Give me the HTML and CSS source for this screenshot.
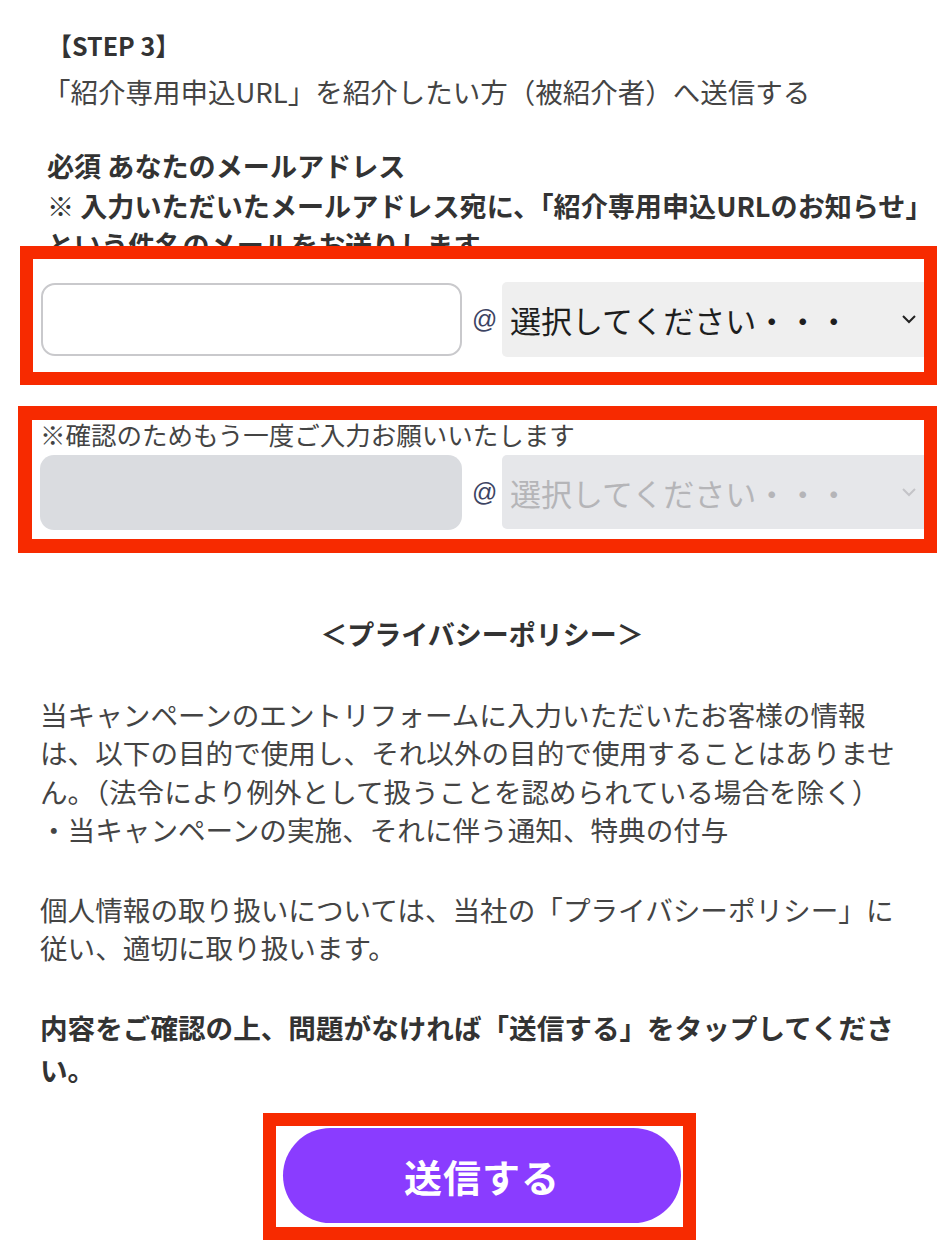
FILE: index.html
```html
<!DOCTYPE html>
<html lang="ja">
<head>
<meta charset="utf-8">
<title>STEP 3</title>
<link rel="stylesheet" href="styles.css">
</head>
<body>
<main class="page">
  <section class="intro">
    <h2 class="step-title">【STEP 3】</h2>
    <p class="step-desc">「紹介専用申込URL」を紹介したい方（被紹介者）へ送信する</p>
    <div class="required">
      <p>必須 あなたのメールアドレス</p>
      <p>※ 入力いただいたメールアドレス宛に、「紹介専用申込URLのお知らせ」という件名のメールをお送りします。</p>
    </div>
  </section>

  <div class="email-row">
    <div class="text-input"></div>
    <span class="at">@</span>
    <div class="select">
      <span class="select-text">選択してください・・・</span>
      <svg class="chev" width="16" height="10" viewBox="0 0 16 10"><path d="M2 2 L8 8 L14 2" fill="none" stroke="#222" stroke-width="2"/></svg>
    </div>
  </div>

  <p class="confirm-label">※確認のためもう一度ご入力お願いいたします</p>
  <div class="email-row confirm-row">
    <div class="text-input disabled"></div>
    <span class="at">@</span>
    <div class="select disabled">
      <span class="select-text">選択してください・・・</span>
      <svg class="chev" width="16" height="10" viewBox="0 0 16 10"><path d="M2 2 L8 8 L14 2" fill="none" stroke="#c4c4c8" stroke-width="2"/></svg>
    </div>
  </div>

  <section class="privacy">
    <h3 class="privacy-title">＜プライバシーポリシー＞</h3>
    <p class="privacy-text">当キャンペーンのエントリフォームに入力いただいたお客様の情報は、以下の目的で使用し、それ以外の目的で使用することはありません。（法令により例外として扱うことを認められている場合を除く）<br>・当キャンペーンの実施、それに伴う通知、特典の付与</p>
    <p class="privacy-text gap">個人情報の取り扱いについては、当社の「プライバシーポリシー」に従い、適切に取り扱います。</p>
    <p class="confirm-note">内容をご確認の上、問題がなければ「送信する」をタップしてください。</p>
  </section>

  <div class="submit-wrap">
    <button class="submit" type="button">送信する</button>
  </div>

  <div class="mark mark-1"></div>
  <div class="mark mark-2"></div>
  <div class="mark mark-3"></div>
</main>
</body>
</html>
```

FILE: styles.css
```css
* { box-sizing: border-box; }

html, body {
  margin: 0;
  padding: 0;
  background: #ffffff;
}

body {
  font-family: "Noto Sans CJK JP", "Noto Sans", sans-serif;
  color: #444444;
}

.page {
  position: relative;
  width: 944px;
  min-height: 1257px;
  padding-top: 22px;
  overflow: hidden;
}

.intro {
  padding-left: 47px;
  width: 937px;
}

.step-title {
  margin: 0;
  font-size: 25px;
  line-height: 46px;
  font-weight: 700;
  color: #333333;
}

.step-desc {
  margin: 0 0 0 -4px;
  font-size: 27.5px;
  line-height: 46px;
  color: #444444;
}

.required {
  margin-top: 32px;
  font-weight: 700;
  font-size: 27.1px;
  line-height: 39.5px;
  color: #333333;
}

.required p {
  margin: 0;
}

.email-row {
  display: flex;
  align-items: center;
  margin-top: 17px;
  padding-left: 41px;
  gap: 10px;
  height: 75px;
}

.text-input {
  width: 421px;
  height: 73px;
  border: 2px solid #c9c9cc;
  border-radius: 14px;
  background: #ffffff;
  flex-shrink: 0;
}

.text-input.disabled {
  height: 75px;
  border: none;
  background: #dadce0;
  margin-left: -1px;
  width: 422px;
}

.at {
  width: 20px;
  text-align: center;
  font-family: "Liberation Sans", sans-serif;
  font-size: 25px;
  color: #3d4463;
  flex-shrink: 0;
}

.select {
  display: flex;
  align-items: center;
  width: 428px;
  height: 75px;
  padding: 0 13px 0 8px;
  background: #efefef;
  border-radius: 5px;
  flex-shrink: 0;
}

.select-text {
  font-size: 31px;
  color: #1e1e1e;
  white-space: nowrap;
}

.chev {
  margin-left: auto;
}

.select.disabled {
  background: #e6e7ea;
  height: 74px;
}

.select.disabled .select-text {
  color: #b5b5b8;
}

.confirm-label {
  margin: 59px 0 0 40px;
  font-size: 25.5px;
  line-height: 36px;
  color: #444444;
}

.confirm-row {
  margin-top: 3px;
}

.privacy {
  margin-top: 84px;
  padding: 0 29px 0 40px;
  width: 944px;
}

.privacy-title {
  margin: 0;
  padding-left: 9px;
  text-align: center;
  font-size: 27px;
  line-height: 40px;
  font-weight: 700;
  color: #333333;
}

.privacy-text {
  margin: 41px 0 0;
  font-size: 27.6px;
  line-height: 38.5px;
  color: #444444;
}

.confirm-note {
  margin: 39px 0 0;
  font-size: 27.6px;
  line-height: 42px;
  font-weight: 700;
  color: #333333;
}

.submit-wrap {
  display: flex;
  justify-content: center;
  padding-left: 20px;
  margin-top: 38px;
}

.submit {
  width: 398px;
  height: 95px;
  border: none;
  border-radius: 48px;
  background: #8a3cff;
  color: #ffffff;
  font-family: "Noto Sans CJK JP", sans-serif;
  font-size: 38px;
  font-weight: 700;
  letter-spacing: 1px;
  padding: 0;
}

.mark {
  position: absolute;
  border: 13px solid #f72a00;
  pointer-events: none;
}

.mark-1 {
  left: 20px;
  top: 246px;
  width: 917px;
  height: 139px;
}

.mark-2 {
  left: 18px;
  top: 406px;
  width: 919px;
  height: 147px;
  border-width: 14px 13px 14px 14px;
}

.mark-3 {
  left: 263px;
  top: 1113px;
  width: 433px;
  height: 127px;
}
```
